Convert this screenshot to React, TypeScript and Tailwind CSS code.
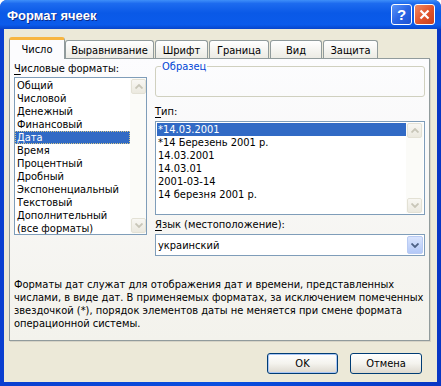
import React from 'react';

const FONT = "font-['DejaVu_Sans_Condensed','DejaVu_Sans',sans-serif]";

const formats = [
  'Общий',
  'Числовой',
  'Денежный',
  'Финансовый',
  'Дата',
  'Время',
  'Процентный',
  'Дробный',
  'Экспоненциальный',
  'Текстовый',
  'Дополнительный',
  '(все форматы)',
];

const types = [
  '*14.03.2001',
  '*14 Березень 2001 р.',
  '14.03.2001',
  '14.03.01',
  '2001-03-14',
  '14 березня 2001 р.',
];

const tabs = [
  { label: 'Выравнивание', w: 'w-[89px]' },
  { label: 'Шрифт', w: 'w-[53px]' },
  { label: 'Граница', w: 'w-[60px]' },
  { label: 'Вид', w: 'w-[52px]' },
  { label: 'Защита', w: 'w-[55px]' },
];

const Chevron: React.FC<{ up?: boolean }> = ({ up }) => (
  <svg width="8" height="5" viewBox="0 0 8 5">
    <path
      d={up ? 'M0.5 4.5 L4 1 L7.5 4.5' : 'M0.5 0.5 L4 4 L7.5 0.5'}
      fill="none"
      stroke="currentColor"
      strokeWidth="1.8"
    />
  </svg>
);

const ScrollBtn: React.FC<{ up?: boolean }> = ({ up }) => (
  <div className="w-[15px] h-[15px] rounded-[2px] border border-[#e3e1d5] bg-gradient-to-b from-[#f8f7f3] to-[#ebe9df] flex items-center justify-center text-[#c8c6b8]">
    <Chevron up={up} />
  </div>
);

const Underlined: React.FC<{ first: string; rest: string }> = ({ first, rest }) => (
  <span>
    <span className="underline underline-offset-[2px]">{first}</span>
    {rest}
  </span>
);

export default function App() {
  return (
    <div className={`w-[441px] h-[386px] bg-white text-[11px] leading-[13px] text-black ${FONT}`}>
      <div className="w-full h-full flex flex-col rounded-t-[7px] overflow-hidden bg-gradient-to-r from-[#0a3fd0] via-[#0a4fe0] to-[#0836c4]">
        {/* title bar */}
        <div className="h-[29px] shrink-0 flex items-center pl-[7px] pr-[6px] bg-[linear-gradient(to_bottom,#3e8ff9_0%,#1d6bef_12%,#0a59e7_45%,#0b5beb_85%,#0845cb_100%)]">
          <span className="flex-1 pt-[2px] text-white font-bold text-[13px] font-['Liberation_Sans',sans-serif] [text-shadow:1px_1px_0_#0b2a8a]">
            Формат ячеек
          </span>
          <div className="flex gap-[2px]">
            <div className="w-[21px] h-[21px] rounded-[3px] border border-white bg-[linear-gradient(135deg,#5b95f8_0%,#2a66e6_50%,#1d52d3_100%)] flex items-center justify-center text-white font-bold text-[15px] leading-none font-['Liberation_Sans',sans-serif]">
              ?
            </div>
            <div className="w-[21px] h-[21px] rounded-[3px] border border-white bg-[linear-gradient(135deg,#f08a64_0%,#e0532b_55%,#c8401e_100%)] flex items-center justify-center">
              <svg width="11" height="11" viewBox="0 0 11 11">
                <path d="M1.5 1.5 L9.5 9.5 M9.5 1.5 L1.5 9.5" stroke="white" strokeWidth="2.2" />
              </svg>
            </div>
          </div>
        </div>

        {/* body */}
        <div className="flex-1 mx-[4px] mb-[4px] bg-[#ece9d8] flex flex-col pt-[8px]">
          {/* tabs */}
          <div className="h-[21px] flex items-end pl-[5px]">
            <div className="relative z-10 w-[56px] h-[22px] -mb-[1px] rounded-t-[3px] border-x border-[#919b9c] border-t-[3px] border-t-[#f7b540] bg-[#fcfcfe] flex items-center justify-center">
              Число
            </div>
            {tabs.map((t, i) => (
              <div
                key={t.label}
                className={`${t.w} ${i === 0 ? 'ml-0' : 'ml-[1px]'} h-[18px] rounded-t-[3px] border-x border-t border-[#919b9c] bg-gradient-to-b from-white to-[#ecebe4] flex items-center justify-center pt-[1px]`}
              >
                {t.label}
              </div>
            ))}
          </div>

          {/* panel */}
          <div className="ml-[5px] w-[421px] h-[283px] border border-[#919b9c] shadow-[1px_1px_0_#d6d3c6] bg-gradient-to-b from-[#fcfcfe] to-[#f3f2ec] px-[4px]">
            <div className="flex gap-[8px]">
              {/* left column */}
              <div className="w-[133px] pt-[3px]">
                <div className="h-[13px]">
                  <Underlined first="Ч" rest="исловые форматы:" />
                </div>
                <div className="mt-[2px] h-[158px] border border-[#7f9db9] bg-white flex overflow-hidden">
                  <div className="flex-1 pt-[1px]">
                    {formats.map((f) => (
                      <div
                        key={f}
                        className={`h-[13px] pl-[2px] whitespace-nowrap ${
                          f === 'Дата'
                            ? 'bg-[#316ac5] text-white outline-dotted outline-1 outline-offset-[-1px] outline-[#d8c98a]'
                            : ''
                        }`}
                      >
                        {f}
                      </div>
                    ))}
                  </div>
                  <div className="w-[16px] bg-[#fbfbf8] flex flex-col justify-between items-end py-[1px]">
                    <ScrollBtn up />
                    <ScrollBtn />
                  </div>
                </div>
              </div>

              {/* right column */}
              <div className="w-[270px] pt-[1px]">
                <fieldset className="h-[37px] border border-[#d0d0bf] rounded-[3px]">
                  <legend className="ml-[5px] px-[1px] text-[#0046d5] leading-[13px]">Образец</legend>
                </fieldset>
                <div className="mt-[8px] h-[13px]">
                  <Underlined first="Т" rest="ип:" />
                </div>
                <div className="mt-[3px] h-[94px] border border-[#7f9db9] bg-white flex overflow-hidden p-[1px]">
                  <div className="flex-1">
                    {types.map((t, i) => (
                      <div
                        key={t}
                        className={`h-[13px] pl-[1px] whitespace-nowrap ${i === 0 ? 'bg-[#316ac5] text-white' : ''}`}
                      >
                        {t}
                      </div>
                    ))}
                  </div>
                  <div className="w-[17px] bg-[#fbfbf8] flex flex-col justify-between items-center">
                    <ScrollBtn up />
                    <ScrollBtn />
                  </div>
                </div>
                <div className="mt-[3px] h-[13px]">
                  <Underlined first="Я" rest="зык (местоположение):" />
                </div>
                <div className="mt-[3px] h-[22px] border border-[#7f9db9] bg-white flex items-center pl-[2px] pr-[1px]">
                  <span className="flex-1">украинский</span>
                  <div className="w-[16px] h-[18px] rounded-[2px] border border-[#b9cbf3] bg-gradient-to-b from-[#d9e4fd] to-[#b3c8f7] flex items-center justify-center text-[#4d6185]">
                    <Chevron />
                  </div>
                </div>
              </div>
            </div>

            <p className="mt-[22px] whitespace-nowrap">
              Форматы дат служат для отображения дат и времени, представленных
              <br />
              числами, в виде дат. В применяемых форматах, за исключением помеченных
              <br />
              звездочкой (*), порядок элементов даты не меняется при смене формата
              <br />
              операционной системы.
            </p>
          </div>

          {/* buttons */}
          <div className="mt-[12px] flex justify-end gap-[12px] pr-[15px]">
            <button className="w-[71px] h-[21px] rounded-[3px] border border-[#003c74] bg-gradient-to-b from-white via-[#f4f3ee] to-[#dcd8ce] shadow-[inset_0_0_0_1px_#a9c6f5] flex items-center justify-center">
              OK
            </button>
            <button className="w-[72px] h-[21px] rounded-[3px] border border-[#003c74] bg-gradient-to-b from-white via-[#f4f3ee] to-[#dcd8ce] flex items-center justify-center">
              Отмена
            </button>
          </div>
        </div>
      </div>
    </div>
  );
}
